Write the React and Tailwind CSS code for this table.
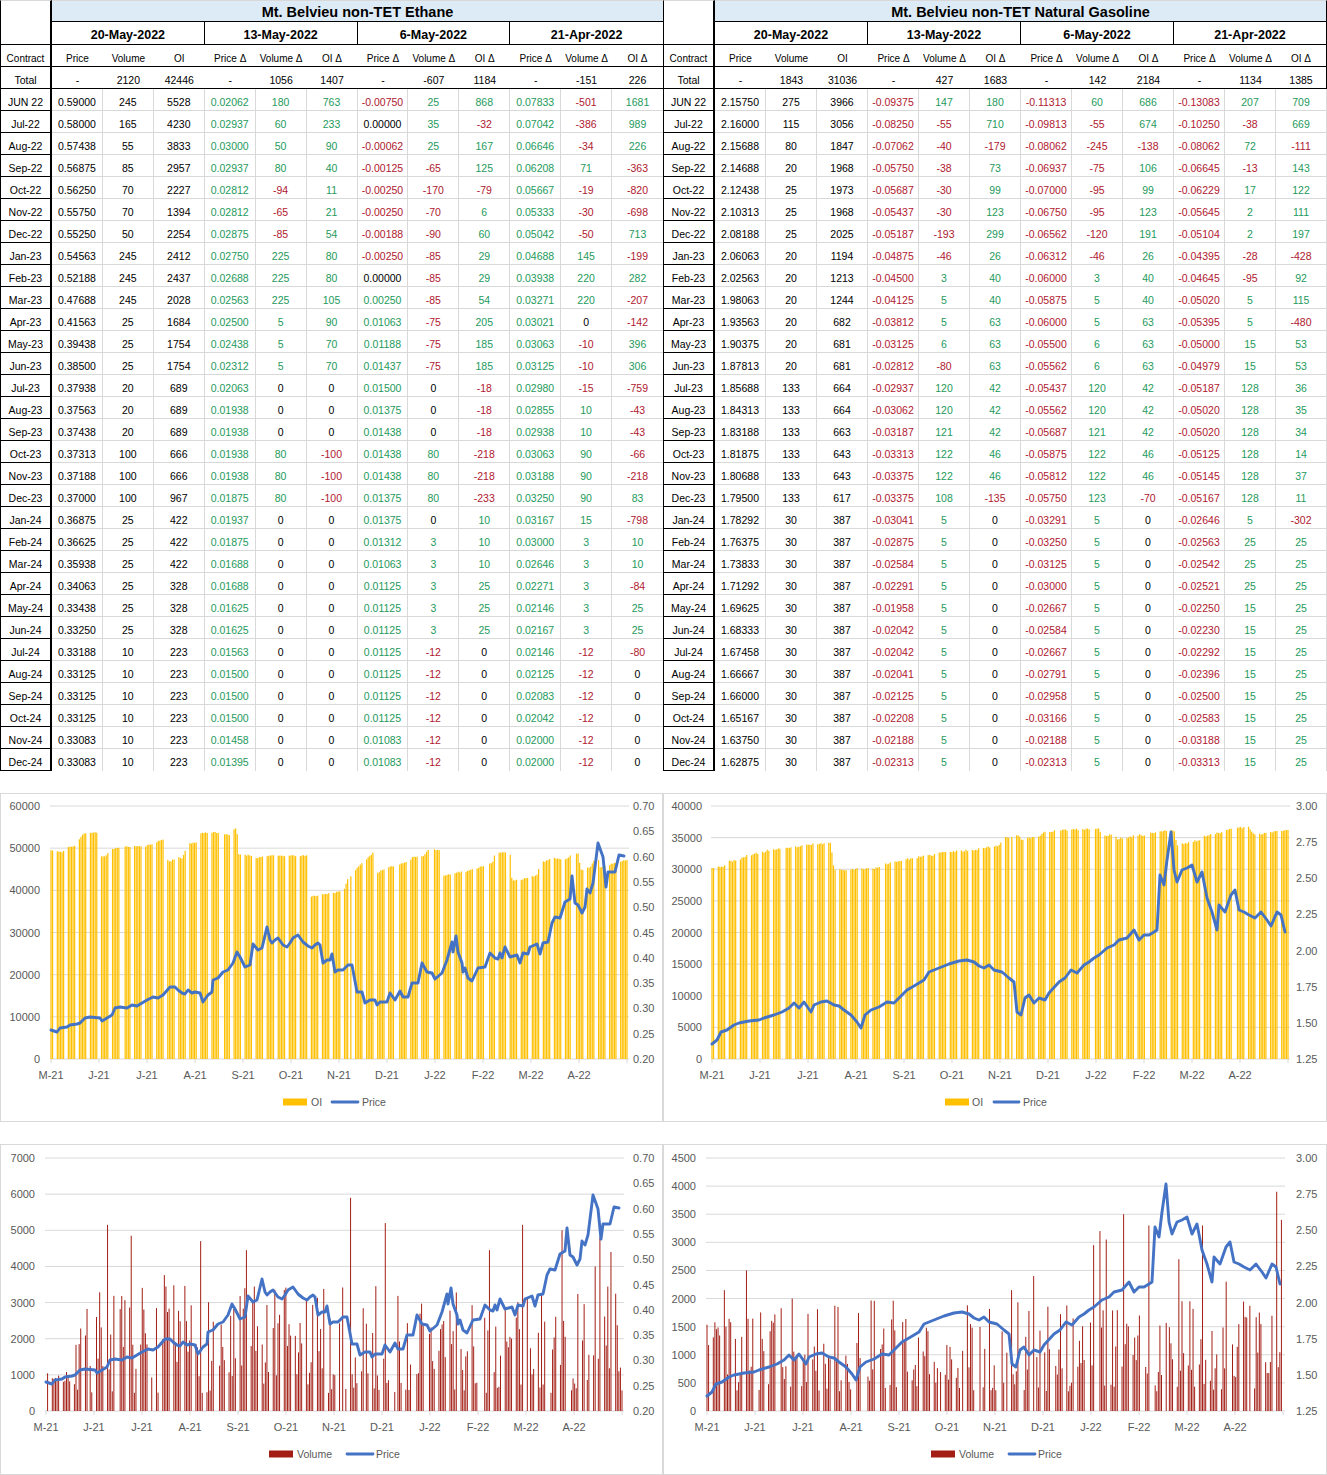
import React from "react";

// ---------- table data ----------
const DATES = ["20-May-2022", "13-May-2022", "6-May-2022", "21-Apr-2022"];
const HEADS = ["Price", "Volume", "OI", "Price Δ", "Volume Δ", "OI Δ", "Price Δ", "Volume Δ", "OI Δ", "Price Δ", "Volume Δ", "OI Δ"];

const ETHANE_TOTAL = "-|2120|42446|-|1056|1407|-|-607|1184|-|-151|226";
const ETHANE = [
  "JUN 22|0.59000|245|5528|0.02062|180|763|-0.00750|25|868|0.07833|-501|1681",
  "Jul-22|0.58000|165|4230|0.02937|60|233|0.00000|35|-32|0.07042|-386|989",
  "Aug-22|0.57438|55|3833|0.03000|50|90|-0.00062|25|167|0.06646|-34|226",
  "Sep-22|0.56875|85|2957|0.02937|80|40|-0.00125|-65|125|0.06208|71|-363",
  "Oct-22|0.56250|70|2227|0.02812|-94|11|-0.00250|-170|-79|0.05667|-19|-820",
  "Nov-22|0.55750|70|1394|0.02812|-65|21|-0.00250|-70|6|0.05333|-30|-698",
  "Dec-22|0.55250|50|2254|0.02875|-85|54|-0.00188|-90|60|0.05042|-50|713",
  "Jan-23|0.54563|245|2412|0.02750|225|80|-0.00250|-85|29|0.04688|145|-199",
  "Feb-23|0.52188|245|2437|0.02688|225|80|0.00000|-85|29|0.03938|220|282",
  "Mar-23|0.47688|245|2028|0.02563|225|105|0.00250|-85|54|0.03271|220|-207",
  "Apr-23|0.41563|25|1684|0.02500|5|90|0.01063|-75|205|0.03021|0|-142",
  "May-23|0.39438|25|1754|0.02438|5|70|0.01188|-75|185|0.03063|-10|396",
  "Jun-23|0.38500|25|1754|0.02312|5|70|0.01437|-75|185|0.03125|-10|306",
  "Jul-23|0.37938|20|689|0.02063|0|0|0.01500|0|-18|0.02980|-15|-759",
  "Aug-23|0.37563|20|689|0.01938|0|0|0.01375|0|-18|0.02855|10|-43",
  "Sep-23|0.37438|20|689|0.01938|0|0|0.01438|0|-18|0.02938|10|-43",
  "Oct-23|0.37313|100|666|0.01938|80|-100|0.01438|80|-218|0.03063|90|-66",
  "Nov-23|0.37188|100|666|0.01938|80|-100|0.01438|80|-218|0.03188|90|-218",
  "Dec-23|0.37000|100|967|0.01875|80|-100|0.01375|80|-233|0.03250|90|83",
  "Jan-24|0.36875|25|422|0.01937|0|0|0.01375|0|10|0.03167|15|-798",
  "Feb-24|0.36625|25|422|0.01875|0|0|0.01312|3|10|0.03000|3|10",
  "Mar-24|0.35938|25|422|0.01688|0|0|0.01063|3|10|0.02646|3|10",
  "Apr-24|0.34063|25|328|0.01688|0|0|0.01125|3|25|0.02271|3|-84",
  "May-24|0.33438|25|328|0.01625|0|0|0.01125|3|25|0.02146|3|25",
  "Jun-24|0.33250|25|328|0.01625|0|0|0.01125|3|25|0.02167|3|25",
  "Jul-24|0.33188|10|223|0.01563|0|0|0.01125|-12|0|0.02146|-12|-80",
  "Aug-24|0.33125|10|223|0.01500|0|0|0.01125|-12|0|0.02125|-12|0",
  "Sep-24|0.33125|10|223|0.01500|0|0|0.01125|-12|0|0.02083|-12|0",
  "Oct-24|0.33125|10|223|0.01500|0|0|0.01125|-12|0|0.02042|-12|0",
  "Nov-24|0.33083|10|223|0.01458|0|0|0.01083|-12|0|0.02000|-12|0",
  "Dec-24|0.33083|10|223|0.01395|0|0|0.01083|-12|0|0.02000|-12|0",
];

const GASOLINE_TOTAL = "-|1843|31036|-|427|1683|-|142|2184|-|1134|1385";
const GASOLINE = [
  "JUN 22|2.15750|275|3966|-0.09375|147|180|-0.11313|60|686|-0.13083|207|709",
  "Jul-22|2.16000|115|3056|-0.08250|-55|710|-0.09813|-55|674|-0.10250|-38|669",
  "Aug-22|2.15688|80|1847|-0.07062|-40|-179|-0.08062|-245|-138|-0.08062|72|-111",
  "Sep-22|2.14688|20|1968|-0.05750|-38|73|-0.06937|-75|106|-0.06645|-13|143",
  "Oct-22|2.12438|25|1973|-0.05687|-30|99|-0.07000|-95|99|-0.06229|17|122",
  "Nov-22|2.10313|25|1968|-0.05437|-30|123|-0.06750|-95|123|-0.05645|2|111",
  "Dec-22|2.08188|25|2025|-0.05187|-193|299|-0.06562|-120|191|-0.05104|2|197",
  "Jan-23|2.06063|20|1194|-0.04875|-46|26|-0.06312|-46|26|-0.04395|-28|-428",
  "Feb-23|2.02563|20|1213|-0.04500|3|40|-0.06000|3|40|-0.04645|-95|92",
  "Mar-23|1.98063|20|1244|-0.04125|5|40|-0.05875|5|40|-0.05020|5|115",
  "Apr-23|1.93563|20|682|-0.03812|5|63|-0.06000|5|63|-0.05395|5|-480",
  "May-23|1.90375|20|681|-0.03125|6|63|-0.05500|6|63|-0.05000|15|53",
  "Jun-23|1.87813|20|681|-0.02812|-80|63|-0.05562|6|63|-0.04979|15|53",
  "Jul-23|1.85688|133|664|-0.02937|120|42|-0.05437|120|42|-0.05187|128|36",
  "Aug-23|1.84313|133|664|-0.03062|120|42|-0.05562|120|42|-0.05020|128|35",
  "Sep-23|1.83188|133|663|-0.03187|121|42|-0.05687|121|42|-0.05020|128|34",
  "Oct-23|1.81875|133|643|-0.03313|122|46|-0.05875|122|46|-0.05125|128|14",
  "Nov-23|1.80688|133|643|-0.03375|122|46|-0.05812|122|46|-0.05145|128|37",
  "Dec-23|1.79500|133|617|-0.03375|108|-135|-0.05750|123|-70|-0.05167|128|11",
  "Jan-24|1.78292|30|387|-0.03041|5|0|-0.03291|5|0|-0.02646|5|-302",
  "Feb-24|1.76375|30|387|-0.02875|5|0|-0.03250|5|0|-0.02563|25|25",
  "Mar-24|1.73833|30|387|-0.02584|5|0|-0.03125|5|0|-0.02542|25|25",
  "Apr-24|1.71292|30|387|-0.02291|5|0|-0.03000|5|0|-0.02521|25|25",
  "May-24|1.69625|30|387|-0.01958|5|0|-0.02667|5|0|-0.02250|15|25",
  "Jun-24|1.68333|30|387|-0.02042|5|0|-0.02584|5|0|-0.02230|15|25",
  "Jul-24|1.67458|30|387|-0.02042|5|0|-0.02667|5|0|-0.02292|15|25",
  "Aug-24|1.66667|30|387|-0.02041|5|0|-0.02791|5|0|-0.02396|15|25",
  "Sep-24|1.66000|30|387|-0.02125|5|0|-0.02958|5|0|-0.02500|15|25",
  "Oct-24|1.65167|30|387|-0.02208|5|0|-0.03166|5|0|-0.02583|15|25",
  "Nov-24|1.63750|30|387|-0.02188|5|0|-0.02188|5|0|-0.03188|15|25",
  "Dec-24|1.62875|30|387|-0.02313|5|0|-0.02313|5|0|-0.03313|15|25",
];

function tone(s) {
  const n = parseFloat(s);
  if (isNaN(n) || n === 0) return "text-black";
  return n > 0 ? "text-[#1e9a5c]" : "text-[#b0182f]";
}

function PriceTable({ title, total, rows, right }) {
  const cc = "border-l border-r-2 border-l-black border-r-black";
  const edge = (i) => (i < 11 || right ? "border-r" : "");
  return (
    <div className="grid grid-cols-[52px_repeat(12,minmax(0,1fr))] grid-rows-[22px_23px_22px_22px] auto-rows-[22px] text-[10.5px] text-black">
      {/* title */}
      <div className={`${cc} border-t border-t-[#d9d9d9]`} />
      <div className={`col-span-12 flex items-center justify-center pt-[3px] border-t border-b border-t-[#d9d9d9] border-b-black bg-[#ddebf7] text-[14.5px] font-bold ${right ? "border-r border-r-black" : ""}`}>
        {title}
      </div>
      {/* dates */}
      <div className={`${cc} border-b border-b-black`} />
      {DATES.map((d, i) => (
        <div
          key={d}
          className={`col-span-3 flex items-center justify-center pt-[5px] border-b border-b-black border-r-black text-[12.5px] font-bold ${i < 3 || right ? "border-r" : ""}`}
        >
          {d}
        </div>
      ))}
      {/* column heads */}
      <div className={`${cc} border-b border-b-black flex items-center justify-center pt-[5px] text-[10px]`}>Contract</div>
      {HEADS.map((h, i) => (
        <div key={i} className={`flex items-center justify-center pt-[5px] border-b border-b-black border-r-black text-[10px] ${right && i === 11 ? "border-r" : ""}`}>
          {h}
        </div>
      ))}
      {/* total */}
      <div className={`${cc} border-b border-b-black flex items-center justify-center pt-[6px]`}>Total</div>
      {total.split("|").map((v, i) => (
        <div key={i} className={`flex items-center justify-center pt-[6px] border-b border-b-black border-r-black ${right && i === 11 ? "border-r" : ""}`}>
          {v}
        </div>
      ))}
      {/* contracts */}
      {rows.map((line, r) => {
        const [name, ...vals] = line.split("|");
        const last = r === rows.length - 1;
        return (
          <React.Fragment key={name}>
            <div className={`${cc} border-b border-b-black flex items-center justify-center pt-[6px]`}>{name}</div>
            {vals.map((v, i) => (
              <div
                key={i}
                className={`flex items-center justify-center pt-[6px] border-r-[#d9d9d9] border-b-[#d9d9d9] ${edge(i)} ${last ? "" : "border-b"} ${i >= 3 ? tone(v) : "text-black"}`}
              >
                {v}
              </div>
            ))}
          </React.Fragment>
        );
      })}
    </div>
  );
}

// ---------- chart data ----------
function rng(seed) {
  return () => {
    seed |= 0;
    seed = (seed + 0x6d2b79f5) | 0;
    let t = Math.imul(seed ^ (seed >>> 15), 1 | seed);
    t = (t + Math.imul(t ^ (t >>> 7), 61 | t)) ^ t;
    return ((t ^ (t >>> 14)) >>> 0) / 4294967296;
  };
}

// 20-May-2021 .. 20-May-2022, weekdays only
const HOLIDAYS = new Set([46, 109, 189, 218, 242, 277, 330]);
const DAYS = [];
for (let d = 0; d <= 365; d++) {
  const wd = (4 + d) % 7;
  if (wd === 0 || wd === 6 || HOLIDAYS.has(d)) continue;
  DAYS.push(d);
}

function interp(pts, t) {
  if (t <= pts[0][0]) return pts[0][1];
  for (let i = 1; i < pts.length; i++) {
    if (t <= pts[i][0]) {
      const [t0, v0] = pts[i - 1];
      const [t1, v1] = pts[i];
      return v0 + ((t - t0) / (t1 - t0)) * (v1 - v0);
    }
  }
  return pts[pts.length - 1][1];
}

const toT = (x, x0) => (x - x0) / 576;

const ETH_OI_KP = [
  [51, 49500], [62, 49000], [66, 50200], [76, 50500], [79, 52000], [84, 53600], [99, 53800], [101, 48000], [106, 48100],
  [110, 49500], [118, 50200], [138, 50500], [143, 50200], [160, 51800], [166, 52400], [168, 46600], [178, 48000],
  [182, 47400], [188, 51200], [198, 51300], [201, 53600], [215, 53800], [230, 53000], [234, 54500], [237, 54600],
  [238, 48600], [250, 48300], [258, 47700], [265, 48200], [308, 48200], [310, 38500], [335, 39500], [345, 40300],
  [347, 42400], [358, 45500], [367, 47600], [375, 49300], [376, 44100], [390, 45500], [410, 47000], [412, 48000],
  [423, 48000], [428, 49600], [441, 49600], [443, 43400], [457, 44300], [467, 44500], [477, 45300], [485, 46000],
  [493, 46700], [495, 48800], [510, 49100], [512, 42400], [523, 42600], [537, 43600], [540, 46400], [553, 47600],
  [565, 47400], [572, 48400], [578, 48800], [581, 44800], [590, 45500], [595, 47500], [598, 48000], [600, 45500],
  [610, 46000], [613, 46400], [627, 47200],
].map(([x, v]) => [toT(x, 51), v]);

const NG_OI_KP = [
  [713, 30300], [725, 30500], [728, 31100], [745, 31800], [748, 32200], [765, 32700], [768, 33000], [790, 33300],
  [795, 33500], [810, 33800], [815, 34000], [832, 34100], [835, 29900], [880, 30200], [882, 30700], [905, 31500],
  [935, 32300], [940, 32600], [970, 33000], [975, 33100], [1000, 33800], [1005, 35000], [1020, 35400], [1022, 34700],
  [1040, 35200], [1045, 35900], [1065, 36200], [1100, 36400], [1102, 35400], [1115, 35400], [1118, 34800],
  [1140, 35400], [1145, 35400], [1160, 36000], [1175, 36200], [1178, 33800], [1200, 34600], [1202, 35000],
  [1225, 36000], [1230, 36500], [1250, 36600], [1255, 35400], [1270, 35800], [1275, 36000], [1289, 36200],
].map(([x, v]) => [toT(x, 713), v]);

const ETH_PRICE = [
  [51, 1030], [57, 1032], [60, 1028], [67, 1027], [70, 1025], [77, 1024], [80, 1023], [85, 1018], [90, 1017], [100, 1018],
  [102, 1021], [107, 1018], [112, 1015], [115, 1008], [120, 1007], [127, 1008], [132, 1005], [137, 1006], [147, 1000],
  [153, 997], [158, 998], [163, 995], [170, 987], [175, 987], [178, 990], [182, 993], [185, 994], [188, 990], [192, 993],
  [195, 992], [200, 993], [203, 1002], [208, 995], [212, 992], [213, 980], [218, 978], [223, 972], [228, 970], [233, 963],
  [237, 952], [240, 957], [245, 967], [250, 965], [253, 944], [258, 950], [262, 948], [267, 927], [270, 940], [272, 943],
  [275, 940], [278, 938], [283, 945], [287, 947], [290, 943], [293, 938], [298, 935], [303, 942], [308, 946], [312, 948],
  [315, 945], [318, 943], [320, 945], [323, 963], [327, 960], [330, 960], [332, 954], [335, 972], [338, 970], [343, 970],
  [348, 965], [352, 965], [357, 992], [362, 992], [365, 1003], [370, 1000], [375, 1000], [377, 1005], [380, 1002],
  [387, 1002], [390, 993], [395, 1000], [400, 991], [403, 997], [408, 997], [412, 983], [418, 983], [422, 963], [427, 972],
  [432, 973], [435, 979], [442, 973], [447, 960], [452, 942], [453, 952], [456, 936], [458, 952], [462, 963], [463, 972],
  [465, 968], [468, 978], [472, 981], [478, 968], [485, 967], [490, 953], [495, 958], [498, 959], [500, 953], [502, 958],
  [505, 947], [510, 957], [517, 955], [520, 963], [523, 953], [528, 954], [530, 947], [537, 944], [540, 954], [543, 943],
  [548, 942], [552, 923], [555, 917], [560, 918], [565, 902], [570, 899], [572, 876], [575, 903], [578, 905], [582, 913],
  [585, 907], [587, 889], [590, 893], [593, 883], [598, 843], [603, 857], [606, 887], [608, 872], [615, 872], [619, 855],
  [624, 856],
].map(([x, y]) => [toT(x, 51), 0.2 + ((1059 - y) / 253) * 0.5]);

const NG_PRICE = [
  [713, 1044], [718, 1040], [722, 1032], [728, 1030], [735, 1025], [740, 1023], [750, 1021], [760, 1020], [765, 1018],
  [775, 1015], [783, 1012], [790, 1008], [795, 1003], [800, 1008], [805, 1002], [812, 1012], [815, 1005], [822, 1002],
  [828, 1001], [835, 1005], [840, 1006], [845, 1010], [852, 1015], [858, 1022], [862, 1028], [866, 1015], [872, 1010],
  [880, 1007], [888, 1002], [895, 1003], [900, 998], [908, 990], [915, 986], [925, 980], [930, 972], [940, 968],
  [950, 964], [960, 961], [968, 960], [975, 962], [980, 966], [985, 968], [990, 965], [995, 970], [1003, 972],
  [1010, 978], [1015, 982], [1018, 1012], [1022, 1015], [1026, 998], [1030, 995], [1035, 1003], [1040, 998],
  [1046, 1000], [1050, 993], [1060, 982], [1066, 978], [1072, 970], [1078, 973], [1085, 965], [1090, 962], [1095, 958],
  [1100, 955], [1108, 948], [1115, 945], [1120, 940], [1128, 938], [1135, 930], [1140, 940], [1145, 935], [1150, 935],
  [1155, 932], [1158, 930], [1161, 875], [1165, 885], [1168, 860], [1172, 832], [1175, 870], [1178, 882], [1183, 870],
  [1188, 868], [1193, 865], [1198, 882], [1203, 872], [1208, 898], [1213, 912], [1218, 930], [1220, 905], [1226, 912],
  [1232, 895], [1236, 890], [1240, 910], [1245, 912], [1250, 915], [1256, 918], [1262, 912], [1268, 920], [1272, 926],
  [1278, 912], [1282, 915], [1286, 932],
].map(([x, y]) => [toT(x, 713), 1.25 + ((1059 - y) / 253) * 1.75]);

function oiBars(kp, seed) {
  const r = rng(seed);
  return DAYS.map((d) => {
    const t = d / 365;
    return [t, interp(kp, t) + (r() - 0.5) * 300];
  });
}

function volBars(seed, base, span, early, spikes, x0) {
  const r = rng(seed);
  const out = DAYS.map((d) => {
    const t = d / 365;
    if (r() < 0.06) return [t, 0];
    if (t < 0.035) return [t, early + r() * early * 0.4];
    return [t, base + Math.pow(r(), 1.35) * span];
  });
  spikes.forEach(([x, v]) => {
    const t = toT(x, x0);
    let best = 0;
    out.forEach((b, i) => {
      if (Math.abs(b[0] - t) < Math.abs(out[best][0] - t)) best = i;
    });
    out[best] = [out[best][0], v];
  });
  return out;
}

const ETH_OI = oiBars(ETH_OI_KP, 11);
const NG_OI = oiBars(NG_OI_KP, 23);
const ETH_VOL = volBars(
  7, 500, 3000, 750,
  [[107, 5150], [131, 4850], [165, 3760], [201, 4700], [247, 4450], [350, 5900], [385, 5200], [490, 4450], [522, 5150], [562, 5000], [595, 4000], [600, 4800], [612, 4400]],
  46
);
const NG_VOL = volBars(
  31, 350, 1650, 1150,
  [[726, 2150], [748, 2500], [793, 2000], [1013, 2150], [1034, 2400], [1095, 2950], [1100, 3200], [1108, 3050], [1125, 3500], [1150, 3300], [1180, 2700], [1203, 3300], [1230, 2300], [1277, 3900], [1282, 3400]],
  708
);

const MONTHS = ["M-21", "J-21", "J-21", "A-21", "S-21", "O-21", "N-21", "D-21", "J-22", "F-22", "M-22", "A-22"];

function Chart({ w, h, x0, x1, top, bottom, leftEnd, leftTicks, leftMax, rightTicks, rightMin, rightMax, bars, barColor, barW, price, legend }) {
  const sx = (t) => x0 + t * (x1 - x0);
  const yl = (v) => bottom - (v / leftMax) * (bottom - top);
  const yr = (p) => bottom - ((p - rightMin) / (rightMax - rightMin)) * (bottom - top);
  const pts = price.map(([t, p]) => `${sx(t).toFixed(1)},${yr(p).toFixed(1)}`).join(" ");
  return (
    <svg width={w} height={h} className="block">
      <g transform="translate(-1,-1)" fontFamily="'Liberation Sans', Arial, sans-serif" fill="#595959">
        {leftTicks.map((v) => (
          <g key={v}>
            <line x1={x0 - 1} x2={x1 + 2} y1={yl(v)} y2={yl(v)} stroke="#d9d9d9" strokeWidth="1" />
            <text x={leftEnd} y={yl(v)} fontSize="11" textAnchor="end" dominantBaseline="central">{v}</text>
          </g>
        ))}
        {rightTicks.map((p) => (
          <text key={p} x={633} y={yr(p)} fontSize="11" dominantBaseline="central">{p.toFixed(2)}</text>
        ))}
        {Array.from({ length: 13 }, (_, i) => {
          const x = x0 + (i * (x1 - x0)) / 12;
          return <line key={i} x1={x} x2={x} y1={bottom} y2={bottom + 4} stroke="#d9d9d9" />;
        })}
        {MONTHS.map((m, i) => (
          <text key={i} x={x0 + (i * (x1 - x0)) / 12} y={bottom + 16} fontSize="11" textAnchor="middle" dominantBaseline="central">{m}</text>
        ))}
        {bars.map(([t, v], i) =>
          v > 0 ? <rect key={i} x={sx(t) - barW / 2} y={yl(v)} width={barW} height={bottom - yl(v)} fill={barColor} /> : null
        )}
        <polyline points={pts} fill="none" stroke="#4472c4" strokeWidth="2.9" strokeLinejoin="round" strokeLinecap="round" />
        <rect x={legend.sw} y={legend.y - 3.5} width="24" height="7" fill={barColor} />
        <text x={legend.tx} y={legend.y} fontSize="10.5" dominantBaseline="central">{legend.label}</text>
        <line x1={legend.l1} x2={legend.l2} y1={legend.y} y2={legend.y} stroke="#4472c4" strokeWidth="2.8" strokeLinecap="round" />
        <text x={legend.ptx} y={legend.y} fontSize="10.5" dominantBaseline="central">Price</text>
      </g>
    </svg>
  );
}

const range = (a, b, s) => {
  const out = [];
  for (let v = a; v <= b + 1e-9; v += s) out.push(Math.round(v * 100) / 100);
  return out;
};

export default function App() {
  return (
    <div className="w-[1327px] min-h-[1475px] bg-white font-['Liberation_Sans',Arial,sans-serif]">
      <div className="flex">
        <div className="w-[663px]">
          <PriceTable title="Mt. Belvieu non-TET Ethane" total={ETHANE_TOTAL} rows={ETHANE} />
        </div>
        <div className="w-[664px]">
          <PriceTable title="Mt. Belvieu non-TET Natural Gasoline" total={GASOLINE_TOTAL} rows={GASOLINE} right />
        </div>
      </div>

      <div className="mt-[22px] grid grid-cols-[663px_664px] grid-rows-[329px_331px] gap-y-[22px]">
        <div className="border border-[#d9d9d9] overflow-hidden">
          <Chart
            w={661} h={327} x0={51} x1={627} top={13} bottom={266} leftEnd={40}
            leftTicks={range(0, 60000, 10000)} leftMax={60000}
            rightTicks={range(0.2, 0.7, 0.05)} rightMin={0.2} rightMax={0.7}
            bars={ETH_OI} barColor="#ffc000" barW={1.2} price={ETH_PRICE}
            legend={{ label: "OI", sw: 283, tx: 311, l1: 332, l2: 358, ptx: 362, y: 309 }}
          />
        </div>
        <div className="border border-[#d9d9d9] overflow-hidden">
          <Chart
            w={662} h={327} x0={49} x1={625} top={13} bottom={266} leftEnd={39}
            leftTicks={range(0, 40000, 5000)} leftMax={40000}
            rightTicks={range(1.25, 3, 0.25)} rightMin={1.25} rightMax={3}
            bars={NG_OI} barColor="#ffc000" barW={1.2} price={NG_PRICE}
            legend={{ label: "OI", sw: 282, tx: 309, l1: 331, l2: 356, ptx: 360, y: 309 }}
          />
        </div>
        <div className="border border-[#d9d9d9] overflow-hidden">
          <Chart
            w={661} h={329} x0={46} x1={622} top={14} bottom={267} leftEnd={35}
            leftTicks={range(0, 7000, 1000)} leftMax={7000}
            rightTicks={range(0.2, 0.7, 0.05)} rightMin={0.2} rightMax={0.7}
            bars={ETH_VOL} barColor="#a31f16" barW={1} price={ETH_PRICE}
            legend={{ label: "Volume", sw: 269, tx: 297, l1: 347, l2: 373, ptx: 376, y: 310 }}
          />
        </div>
        <div className="border border-[#d9d9d9] overflow-hidden">
          <Chart
            w={662} h={329} x0={44} x1={620} top={14} bottom={267} leftEnd={33}
            leftTicks={range(0, 4500, 500)} leftMax={4500}
            rightTicks={range(1.25, 3, 0.25)} rightMin={1.25} rightMax={3}
            bars={NG_VOL} barColor="#a31f16" barW={1} price={NG_PRICE}
            legend={{ label: "Volume", sw: 268, tx: 296, l1: 346, l2: 372, ptx: 375, y: 310 }}
          />
        </div>
      </div>
    </div>
  );
}
